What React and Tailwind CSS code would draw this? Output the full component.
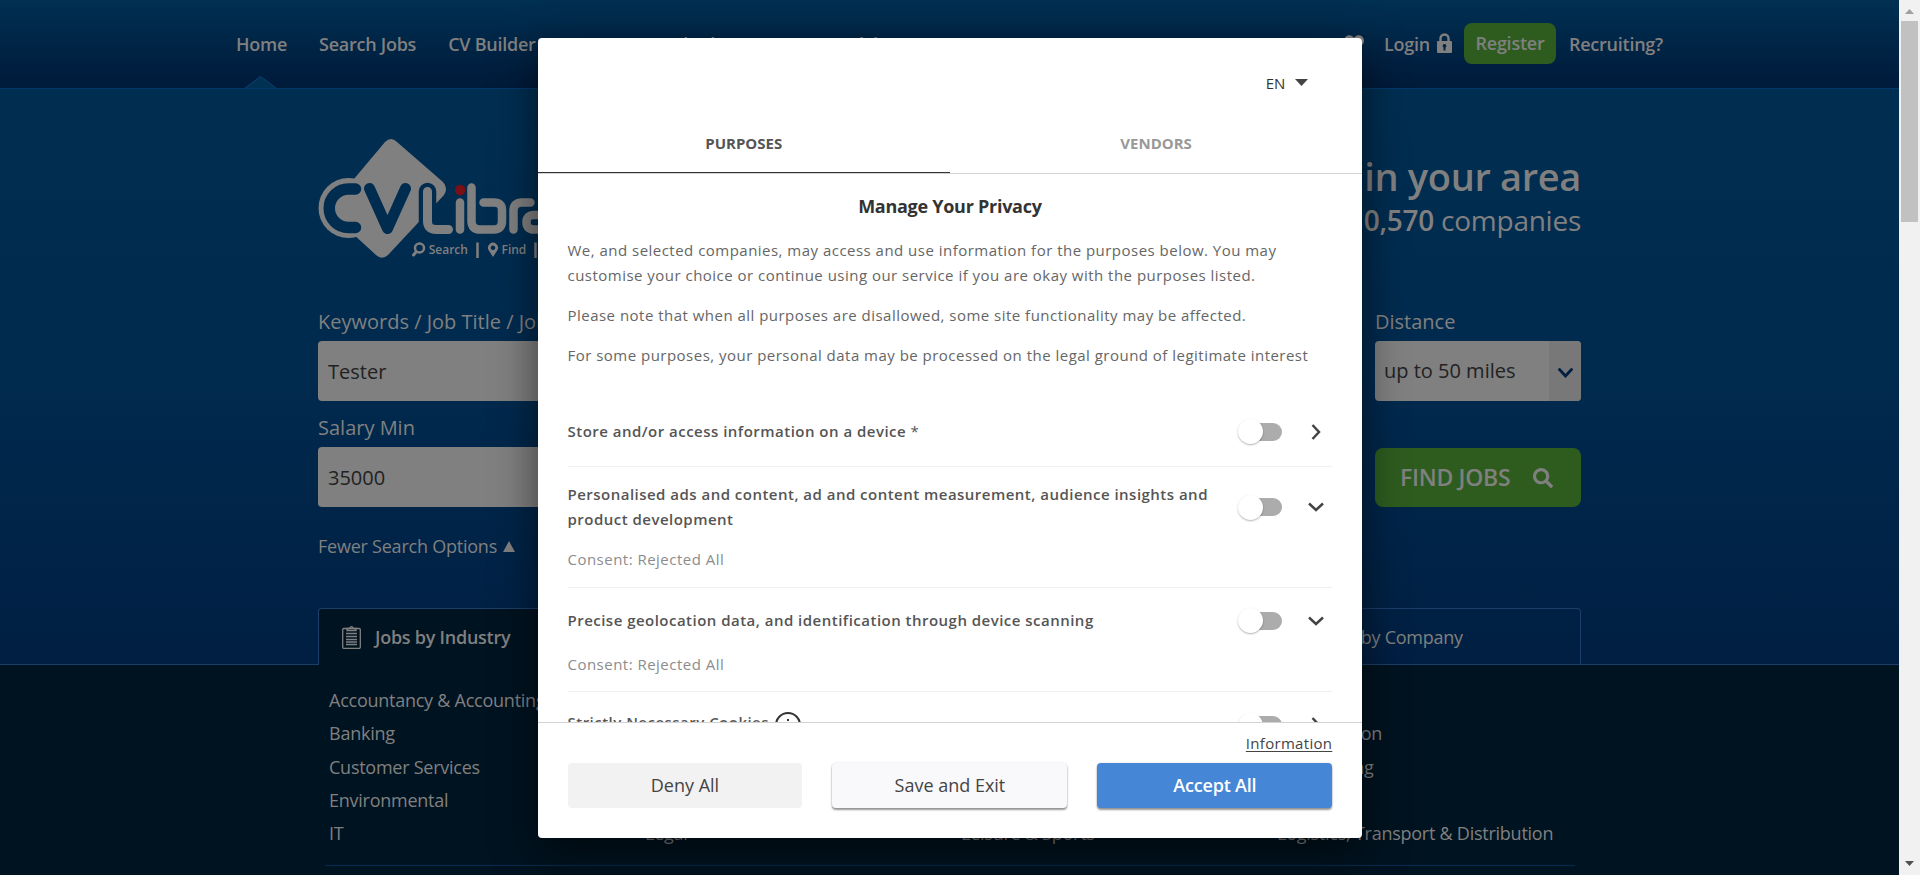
import React from "react";
import { FaHeart, FaSearch } from "react-icons/fa";

const BODY_LINKS = [
  ["Accountancy & Accounting", "Banking", "Customer Services", "Environmental", "IT"],
  ["Administration", "Charity", "Design", "Hospitality", "Legal"],
  ["Agriculture", "Catering", "Distribution", "HR", "Leisure & Sports"],
  ["Arts", "Construction", "Engineering", "Insurance", "Logistics, Transport & Distribution"],
];

function Logo() {
  return (
    <svg width="330" height="130" viewBox="310 132 330 130" className="block" fill="none" strokeLinecap="round" strokeLinejoin="round">
      <path d="M385 142 Q391 136 397 142 L443 182 Q448.500 188 444 195 L388 255 Q382 260.500 376 255 L340 222 L343 192 Z" fill="#808080" />
      <circle cx="348.500" cy="208" r="30" fill="#808080" />
      <path d="M355.500 189 H348.500 A19 19 0 0 0 348.500 227.500 H355.500" stroke="#002c50" strokeWidth="11.500" />
      <path d="M369.500 188.500 L387.500 228.500 L405.500 188.500" stroke="#002c50" strokeWidth="11" />
      <path d="M427.500 191.500 V221 Q427.500 229.500 436 229.500 H448.500" stroke="#002c50" strokeWidth="17.500" />
      <path d="M427.500 191.500 V221 Q427.500 229.500 436 229.500 H448.500" stroke="#808080" strokeWidth="9" />
      <circle cx="460.200" cy="190" r="5.300" fill="#7a1015" />
      <g stroke="#808080" strokeWidth="8.500">
        <path d="M460 202.500 V229.500" />
        <path d="M471.500 187.500 V221 Q471.500 229.500 480 229.500 H494 Q502 229.500 502 221 V210 Q502 202.500 494 202.500 H483.500" />
        <path d="M513.500 229.500 V211 Q513.500 202.500 522 202.500 H530.500" />
        <path d="M550 229.500 H534 Q526.500 229.500 526.500 222 Q526.500 215 534 215 H550" />
      </g>
      <circle cx="419.500" cy="248" r="4.500" stroke="#808080" strokeWidth="2.500" />
      <path d="M416 252 L413.500 255" stroke="#808080" strokeWidth="3" />
      <path d="M477.500 242.500 V258 M535.500 242.500 V258" stroke="#808080" strokeWidth="2.500" strokeLinecap="butt" />
      <path fillRule="evenodd" d="M493 257 L488.800 250.500 A5 5 0 1 1 497.200 250.500 Z M493 245.500 a2.300 2.300 0 1 0 0.010 0 Z" fill="#808080" />
      <text x="428.700" y="253.500" fontSize="12" fontWeight="600" fill="#808080">Search</text>
      <text x="501.500" y="253.500" fontSize="12" fontWeight="600" fill="#808080">Find</text>
    </svg>
  );
}

function LockIcon() {
  return (
    <svg width="15" height="20" viewBox="0 0 15 20" className="ml-[7px] mr-[12px] mb-[3px]">
      <path d="M3.500 9 V5.500 A4 4 0 0 1 11.500 5.500 V9" fill="none" stroke="#808080" strokeWidth="2.400" />
      <path fillRule="evenodd" d="M1 8 H14 Q15 8 15 9 V19 Q15 20 14 20 H1 Q0 20 0 19 V9 Q0 8 1 8 Z M7.500 11 A1.900 1.900 0 0 0 6.500 14.500 V17.500 H8.500 V14.500 A1.900 1.900 0 0 0 7.500 11 Z" fill="#808080" />
    </svg>
  );
}

function Header() {
  return (
    <header className="flex h-[89px] shrink-0 justify-between border-b border-[#003a6c] bg-linear-to-b from-[#003052] to-[#001a3a] pl-[236px] pr-[236px] text-[18px] font-semibold tracking-[-0.25px] text-[#808080]">
      <nav className="flex h-full items-center gap-8 whitespace-nowrap">
        <span className="flex h-full w-[51px] flex-col items-center">
          <span className="flex h-[76px] items-center pt-[13px]">Home</span>
          <svg width="31" height="12" viewBox="0 0 31 12" className="-ml-[2px]">
            <path d="M0 12 L15.500 0.500 L31 12Z" fill="#003052" />
            <path d="M0 12 L15.500 0.500 L31 12" fill="none" stroke="#0d4173" />
          </svg>
        </span>
        <span>Search Jobs</span>
        <span>CV Builder</span>
        <span>Courses</span>
        <span>Job Alerts</span>
        <span>Career Advice</span>
      </nav>
      <div className="flex items-center whitespace-nowrap">
        <FaHeart className="mr-[20px] h-[20px] w-[20px]" />
        <span>Login</span>
        <LockIcon />
        <span className="mb-px mr-[13px] flex h-[41px] w-[92px] items-center justify-center rounded-lg bg-[#2e5c1f]">Register</span>
        <span>Recruiting?</span>
      </div>
    </header>
  );
}

function Field({ label, value }) {
  return (
    <div className="flex w-[600px] flex-col">
      <span className="h-[40px] text-[20px] leading-[42px] text-[#808080]">{label}</span>
      <span className="flex h-[60px] items-center rounded bg-[#808080] pl-[10px] pt-px text-[20px] text-[#222]">{value}</span>
    </div>
  );
}

function Hero() {
  return (
    <section className="flex h-[576px] shrink-0 flex-col border-b border-[#1b3f69] bg-linear-to-b from-[#002e51] via-[#002a4e] to-[#001f42] pl-[318px] pr-[318px]">
      <div className="flex h-[212px] justify-between pt-[43px]">
        <div className="-ml-2"><Logo /></div>
        <div className="flex flex-col items-end whitespace-nowrap pt-[19px] text-[#808080]">
          <span className="h-[49px] text-[38px] font-semibold leading-[50px] tracking-[-0.35px]">194,223 jobs in your area</span>
          <span className="text-[28px] leading-[40px] tracking-[-0.25px]">from over <b className="font-semibold">10,570</b> companies</span>
        </div>
      </div>
      <div className="flex h-[307px] justify-between">
        <div className="flex flex-col">
          <Field label="Keywords / Job Title / Job Ref" value="Tester" />
          <div className="mt-[6px]"><Field label="Salary Min" value="35000" /></div>
          <span className="mt-[26px] flex items-center gap-[6px] text-[18px] leading-[26px] tracking-[-0.23px] text-[#808080]">
            Fewer Search Options
            <svg width="12" height="11" viewBox="0 0 13 12"><path d="M0 12 L6.500 0 L13 12Z" fill="#808080" /></svg>
          </span>
        </div>
        <div className="flex w-[206px] flex-col">
          <span className="h-[40px] text-[20px] leading-[42px] text-[#808080]">Distance</span>
          <span className="flex h-[60px] items-center justify-between overflow-hidden rounded bg-[#808080] pl-[9px] text-[20px] text-[#222]">
            up to 50 miles
            <span className="flex h-full w-[32px] items-center justify-center bg-[#787878] pt-[3px]">
              <svg width="15" height="10" viewBox="0 0 15 10"><path d="M1.500 1.500 L7.500 8 L13.500 1.500" fill="none" stroke="#001f42" strokeWidth="2.800" strokeLinecap="round" /></svg>
            </span>
          </span>
          <span className="mt-[47px] flex h-[59px] items-center rounded-lg bg-[#2e5c1f] pl-[25px] text-[23px] font-semibold tracking-[-0.3px] text-[#808080]">
            <span className="w-[133px]">FIND JOBS</span>
            <FaSearch className="h-[20px] w-[20px]" />
          </span>
        </div>
      </div>
      <div className="-mb-px flex h-[57px] w-[1263px] text-[18px] tracking-[-0.25px] text-[#808080]">
        <div className="flex w-[316px] items-center rounded-t border border-b-0 border-[#1b3f69] bg-[#001320] pl-[23px]">
          <svg width="19" height="23" viewBox="0 0 19 23" fill="none" stroke="#808080" strokeWidth="1.300">
            <rect x="0.700" y="2.500" width="17.600" height="19.800" rx="1" />
            <path d="M5 4.500 V2.500 H7.500 Q9.500 -1 11.500 2.500 H14 V4.500 Z M4 7.500 H15 M4 10.500 H15 M4 13.500 H15 M4 16 H15 M4 18.500 H15" />
          </svg>
          <span className="ml-[14px] font-semibold">Jobs by Industry</span>
        </div>
        <div className="flex w-[316px] items-center border border-l-0 border-[#1b3f69] pl-[56px]">Jobs by Location</div>
        <div className="flex w-[316px] items-center border border-l-0 border-[#1b3f69] pl-[56px]">Jobs by Title</div>
        <div className="flex w-[315px] items-center rounded-tr border border-l-0 border-[#1b3f69] pl-[56px] pt-px">Jobs by Company</div>
      </div>
    </section>
  );
}

function Toggle() {
  return (
    <span className="flex h-[25px] w-[44px] items-center rounded-full">
      <span className="flex h-[18px] w-[44px] items-center rounded-full bg-linear-to-r from-transparent from-40% to-[#acacac] to-40%">
        <span className="h-[25px] w-[25px] rounded-full bg-white shadow-[0_1px_2px_rgba(0,0,0,0.3)]" />
      </span>
    </span>
  );
}

function Chevron({ down }) {
  return (
    <svg width="16" height="16" viewBox="0 0 16 16" fill="none" stroke="#444" strokeWidth="2.500">
      <path d={down ? "M1 4.500 L8 11 L15 4.500" : "M4.500 1 L11 8 L4.500 15"} />
    </svg>
  );
}

function Row({ title, down, consent, className, info }) {
  return (
    <div className={"flex shrink-0 flex-col border-b border-[#f0f0f0] " + className}>
      <div className="flex items-center justify-between">
        <span className="flex w-[650px] items-center gap-[6px] text-[15px] font-semibold leading-[25px] tracking-[0.480px] text-[#555]">
          {info ? <span className="-mt-[5px]">{title}</span> : title}
          {info && (
            <svg width="26" height="26" viewBox="0 0 26 26" fill="none" stroke="#333" strokeWidth="2">
              <circle cx="13" cy="13" r="12" />
              <path d="M13 7 V9 M13 11.500 V19" />
            </svg>
          )}
        </span>
        <span className="flex items-center gap-[26px] pr-[8px]"><Toggle /><Chevron down={down} /></span>
      </div>
      {consent && <span className="mt-auto text-[15px] leading-[25px] tracking-[0.480px] text-[#8c8c8c]">Consent: Rejected All</span>}
    </div>
  );
}

function Modal() {
  return (
    <div className="absolute left-[537.500px] top-[38px] flex h-[800px] w-[824.800px] flex-col overflow-hidden rounded bg-white shadow-[0_14px_44px_rgba(0,0,0,0.55)]">
      <div className="flex h-[68px] shrink-0 items-end justify-end gap-[10px] pb-[12px] pr-[54px] text-[15px] text-[#333]">
        EN
        <svg width="13" height="7" viewBox="0 0 13 7" className="mb-[8px]"><path d="M0 0 H13 L6.500 7Z" fill="#444" /></svg>
      </div>
      <div className="flex h-[68px] shrink-0 border-b border-[#d2d2d2] text-[15px] font-bold">
        <span className="flex w-1/2 items-center justify-center border-b border-[#333] pt-[8px] text-[#555]">PURPOSES</span>
        <span className="flex w-1/2 items-center justify-center pt-[8px] text-[#999]">VENDORS</span>
      </div>
      <div className="flex h-[548px] shrink-0 flex-col overflow-hidden px-[30px] text-[15px] leading-[25px] tracking-[0.480px] text-[#666]">
        <h2 className="mt-[20px] text-center text-[18px] font-bold tracking-[-0.270px] text-[#333]">Manage Your Privacy</h2>
        <p className="mt-[19px]">We, and selected companies, may access and use information for the purposes below. You may<br />customise your choice or continue using our service if you are okay with the purposes listed.</p>
        <p className="mt-[15px]">Please note that when all purposes are disallowed, some site functionality may be affected.</p>
        <p className="mt-[15px]">For some purposes, your personal data may be processed on the legal ground of legitimate interest</p>
        <Row className="mt-[51px] h-[48px]" title={<span>Store and/or access information on a device <span className="font-normal">*</span></span>} />
        <Row className="h-[121px] pb-[15px] pt-[15px]" down consent title="Personalised ads and content, ad and content measurement, audience insights and product development" />
        <Row className="h-[104px] pb-[14px] pt-[20px]" down consent title="Precise geolocation data, and identification through device scanning" />
        <Row className="h-[80px] pt-[20px]" info title="Strictly Necessary Cookies" />
      </div>
      <div className="flex grow flex-col border-t border-[#d2d2d2] px-[30px] text-[18px] text-[#444]">
        <span className="h-[40px] self-end pt-[9px] text-[15px] tracking-[0.3px]"><span className="underline underline-offset-2">Information</span></span>
        <div className="flex gap-[30px]">
          <span className="flex h-[45px] w-[235px] items-center justify-center rounded bg-[#f2f2f2]">Deny All</span>
          <span className="flex h-[45px] w-[235px] items-center justify-center rounded bg-[#f9f9fb] shadow-[0_2px_2px_rgba(0,0,0,0.4),0_0_2px_rgba(0,0,0,0.15)]">Save and Exit</span>
          <span className="flex h-[45px] w-[235px] items-center justify-center rounded bg-[#4587d6] font-semibold tracking-[-0.2px] text-white shadow-[0_2px_2px_rgba(0,0,0,0.4),0_0_2px_rgba(0,0,0,0.15)]">Accept All</span>
        </div>
      </div>
    </div>
  );
}

export default function App() {
  return (
    <div className="relative flex h-[875px] w-[1920px] overflow-hidden bg-[#001320] font-['Open_Sans',sans-serif]">
      <div className="flex h-full w-[1899px] flex-col">
        <Header />
        <Hero />
        <div className="ml-[325px] flex h-[201px] w-[1250px] shrink-0 border-b border-[#002c50] pl-[4px] pt-[19px] text-[18px] tracking-[-0.250px] text-[#808080]">
          {BODY_LINKS.map((col, i) => (
            <div key={i} className="flex w-[316px] shrink-0 flex-col whitespace-nowrap leading-[33.300px]">
              {col.map((t) => <span key={t}>{t}</span>)}
            </div>
          ))}
        </div>
      </div>
      <div className="flex h-full w-[21px] flex-col items-center justify-between bg-[#f1f1f1] pb-[9px] pt-[9px]">
        <div className="flex flex-col items-center gap-[7px]">
          <svg width="9" height="5" viewBox="0 0 9 5"><path d="M0 5 L4.500 0 L9 5Z" fill="#a0a0a0" /></svg>
          <div className="h-[201px] w-[17px] bg-[#c1c1c1]" />
        </div>
        <svg width="9" height="5" viewBox="0 0 9 5"><path d="M0 0 L4.500 5 L9 0Z" fill="#505050" /></svg>
      </div>
      <Modal />
    </div>
  );
}
